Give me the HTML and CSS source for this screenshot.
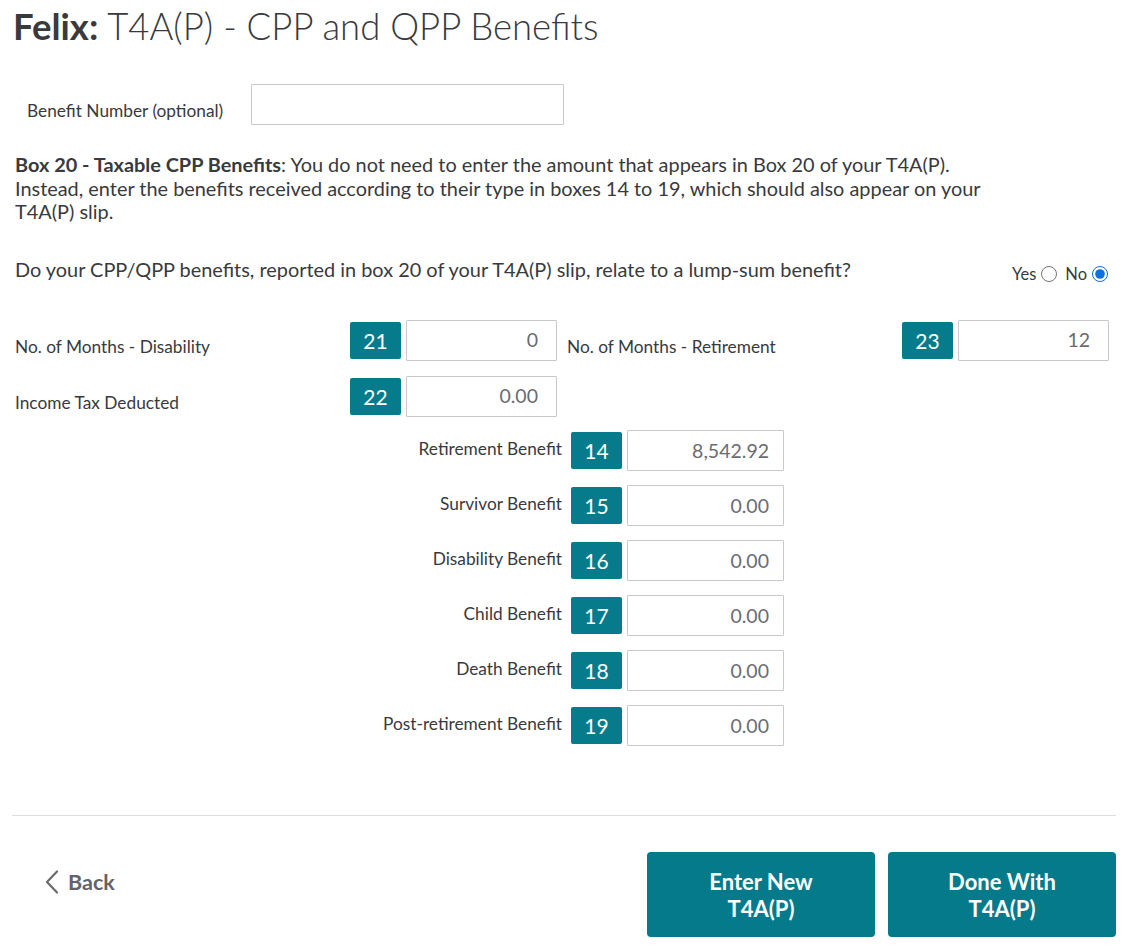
FILE: index.html
```html
<!DOCTYPE html>
<html lang="en">
<head>
<meta charset="utf-8">
<title>T4A(P) - CPP and QPP Benefits</title>
<link rel="stylesheet" href="styles.css">
</head>
<body>
<main class="page">
  <h1 class="title"><span class="title-name">Felix:</span> T4A(P) - CPP and QPP Benefits</h1>

  <div class="benefit-number">
    <label class="bn-label">Benefit Number (optional)</label>
    <input class="field bn-field" type="text" value="">
  </div>

  <p class="intro"><strong>Box 20 - Taxable CPP Benefits</strong>: You do not need to enter the amount that appears in Box 20 of your T4A(P).<br>Instead, enter the benefits received according to their type in boxes 14 to 19, which should also appear on your<br>T4A(P) slip.</p>

  <div class="question">
    <p class="q-text">Do your CPP/QPP benefits, reported in box 20 of your T4A(P) slip, relate to a lump-sum benefit?</p>
    <div class="radios">
      <label class="radio-opt">Yes <input type="radio" name="lump"></label>
      <label class="radio-opt">No <input type="radio" name="lump" checked></label>
    </div>
  </div>

  <div class="pair-grid">
    <div class="half">
      <span class="half-label">No. of Months - Disability</span>
      <span class="badge">21</span>
      <input class="field num" type="text" value="0">
    </div>
    <div class="half">
      <span class="half-label">No. of Months - Retirement</span>
      <span class="badge">23</span>
      <input class="field num" type="text" value="12">
    </div>
    <div class="half">
      <span class="half-label">Income Tax Deducted</span>
      <span class="badge">22</span>
      <input class="field num" type="text" value="0.00">
    </div>
  </div>

  <div class="benefits">
    <div class="b-row"><span class="b-label">Retirement Benefit</span><span class="badge">14</span><input class="field num wide" type="text" value="8,542.92"></div>
    <div class="b-row"><span class="b-label">Survivor Benefit</span><span class="badge">15</span><input class="field num wide" type="text" value="0.00"></div>
    <div class="b-row"><span class="b-label">Disability Benefit</span><span class="badge">16</span><input class="field num wide" type="text" value="0.00"></div>
    <div class="b-row"><span class="b-label">Child Benefit</span><span class="badge">17</span><input class="field num wide" type="text" value="0.00"></div>
    <div class="b-row"><span class="b-label">Death Benefit</span><span class="badge">18</span><input class="field num wide" type="text" value="0.00"></div>
    <div class="b-row"><span class="b-label">Post-retirement Benefit</span><span class="badge">19</span><input class="field num wide" type="text" value="0.00"></div>
  </div>

  <footer class="footer">
    <a class="back" href="#">
      <svg class="chev" width="14" height="24" viewBox="0 0 14 24" aria-hidden="true"><path d="M12 1.5 L2 12 L12 22.5" fill="none" stroke="#6b6b6b" stroke-width="2.2" stroke-linecap="round" stroke-linejoin="round"/></svg>
      <span>Back</span>
    </a>
    <div class="actions">
      <button class="btn">Enter New<br>T4A(P)</button>
      <button class="btn">Done With<br>T4A(P)</button>
    </div>
  </footer>
</main>
</body>
</html>
```

FILE: styles.css
```css
* { box-sizing: border-box; }

body {
  margin: 0;
  background: #ffffff;
  color: #393a3d;
  font-family: Lato, "Open Sans", "Liberation Sans", sans-serif;
}

.page {
  padding: 0 12px 0 12px;
}

.title {
  margin: 0;
  padding: 5px 0 0 1px;
  font-size: 36.5px;
  line-height: 42px;
  font-weight: 300;
  color: #393a3d;
}
.title-name { font-weight: 700; }

.benefit-number {
  display: flex;
  align-items: flex-start;
  margin-top: 37px;
  padding-left: 15px;
}
.bn-label {
  width: 224px;
  padding-top: 16px;
  font-size: 17.3px;
  line-height: 22px;
}
.bn-field { width: 313px; height: 41px; }

.field {
  border: 1px solid #c9c9c9;
  border-radius: 1px;
  background: #fff;
  font-family: inherit;
  font-size: 19.5px;
  color: #6b6c72;
  outline: none;
}
.num {
  width: 151px;
  height: 41px;
  text-align: right;
  padding: 0 18px 2px 8px;
}
.num.wide { width: 157px; padding-right: 14px; padding-bottom: 0; }

.intro {
  margin: 28px 0 0 3px;
  font-size: 19.9px;
  line-height: 23.5px;
  white-space: nowrap;
}

.question {
  display: flex;
  align-items: flex-start;
  justify-content: space-between;
  margin-top: 33px;
}
.q-text {
  margin: 0 0 0 3px;
  font-size: 19.9px;
  line-height: 24px;
}
.radios {
  display: flex;
  gap: 8px;
  padding-top: 7px;
  padding-right: 8px;
  font-size: 16.5px;
}
.radio-opt {
  display: flex;
  align-items: center;
  gap: 5px;
}
.radio-opt input {
  margin: 0;
  width: 16px;
  height: 16px;
  accent-color: #0d6fe0;
}

.pair-grid {
  display: grid;
  grid-template-columns: 542px 542px;
  column-gap: 10px;
  row-gap: 15px;
  margin-top: 36px;
  padding-left: 3px;
}
.half {
  display: flex;
  align-items: center;
}
.half-label {
  flex: 1;
  font-size: 17.3px;
  padding-top: 13px;
}

.badge {
  display: inline-flex;
  align-items: center;
  justify-content: center;
  width: 51px;
  height: 37px;
  margin-right: 5px;
  background: #057b8b;
  color: #fff;
  font-size: 21px;
  border-radius: 2px;
}

.benefits {
  display: flex;
  flex-direction: column;
  gap: 14.2px;
  margin-top: 13px;
}
.b-row {
  display: flex;
  align-items: center;
}
.b-label {
  width: 559px;
  text-align: right;
  padding-right: 9px;
  font-size: 17.3px;
  padding-bottom: 4px;
}

.footer {
  display: flex;
  justify-content: space-between;
  align-items: flex-start;
  margin-top: 69px;
  border-top: 1px solid #dcdde0;
  padding-top: 36px;
}
.back {
  display: flex;
  align-items: center;
  gap: 9px;
  margin-left: 33px;
  margin-top: 17px;
  color: #636469;
  text-decoration: none;
  font-size: 21.5px;
  font-weight: 700;
}
.chev { display: block; }

.actions {
  display: flex;
  gap: 13px;
}
.btn {
  width: 228px;
  height: 85px;
  border: none;
  border-radius: 4px;
  background: #047a8b;
  color: #fff;
  font-family: inherit;
  font-size: 22px;
  font-weight: 700;
  line-height: 27px;
  cursor: pointer;
}
```
